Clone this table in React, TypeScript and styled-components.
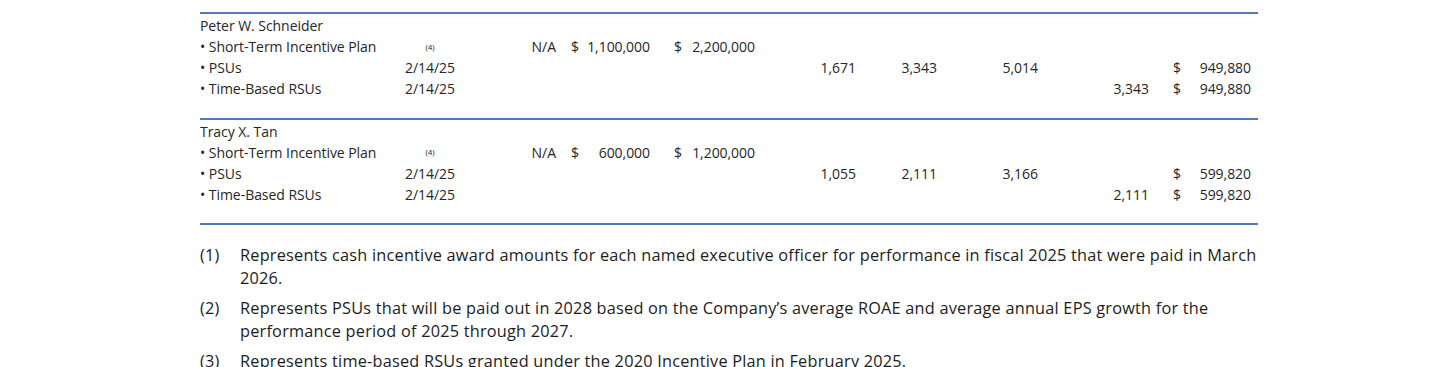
import styled, { createGlobalStyle } from 'styled-components';

const GlobalStyle = createGlobalStyle`
  html, body {
    margin: 0;
    padding: 0;
    background: #ffffff;
  }
  body {
    font-family: "Open Sans", "Noto Sans", sans-serif;
    color: #222;
  }
`;

// STYLED COMPONENTS

const Page = styled.div`
  width: 1058px;
  margin-left: 200px;
  padding-top: 12px;
`;

const Section = styled.div`
  border-top: 2px solid #4f78bf;
  padding: 1px 0 18.5px;
`;

const BottomRule = styled.div`
  border-top: 2px solid #4f78bf;
`;

const Row = styled.div`
  display: grid;
  grid-template-columns: 195px 70px 91px 94px 105px 101px 81px 101px 111px 102px 7px;
  height: 21px;
  align-items: center;
  font-size: 14px;
  letter-spacing: -0.05px;
  color: #262626;
  white-space: nowrap;
`;

const Label = styled.div`
  text-align: left;
`;

const Center = styled.div`
  text-align: center;
  position: relative;
`;

const Note = styled.sup`
  font-size: 8px;
  position: absolute;
  left: 0;
  right: 0;
  top: -6px;
  text-align: center;
`;

const Num = styled.div`
  text-align: right;
`;

const Money = styled.div<{ $pad: number }>`
  display: flex;
  justify-content: space-between;
  padding-left: ${(p) => p.$pad}px;
`;

const Footnotes = styled.ol`
  list-style: none;
  margin: 19px 0 0;
  padding: 0;
  font-size: 16.3px;
  letter-spacing: 0.22px;
  line-height: 23px;
  color: #1c1c1c;
`;

const Footnote = styled.li`
  display: grid;
  grid-template-columns: 40px 1fr;
  margin-bottom: 7px;
`;

type Line = {
  label: string;
  date?: string;
  note?: string;
  na?: string;
  target?: string;
  max?: string;
  threshold?: string;
  targetShares?: string;
  maxShares?: string;
  rsus?: string;
  fair?: string;
};

type Person = { name: string; lines: Line[] };

const people: Person[] = [
  {
    name: 'Peter W. Schneider',
    lines: [
      { label: 'Short-Term Incentive Plan', note: '(4)', na: 'N/A', target: '1,100,000', max: '2,200,000' },
      { label: 'PSUs', date: '2/14/25', threshold: '1,671', targetShares: '3,343', maxShares: '5,014', fair: '949,880' },
      { label: 'Time-Based RSUs', date: '2/14/25', rsus: '3,343', fair: '949,880' },
    ],
  },
  {
    name: 'Tracy X. Tan',
    lines: [
      { label: 'Short-Term Incentive Plan', note: '(4)', na: 'N/A', target: '600,000', max: '1,200,000' },
      { label: 'PSUs', date: '2/14/25', threshold: '1,055', targetShares: '2,111', maxShares: '3,166', fair: '599,820' },
      { label: 'Time-Based RSUs', date: '2/14/25', rsus: '2,111', fair: '599,820' },
    ],
  },
];

const notes = [
  'Represents cash incentive award amounts for each named executive officer for performance in fiscal 2025 that were paid in March 2026.',
  'Represents PSUs that will be paid out in 2028 based on the Company\u2019s average ROAE and average annual EPS growth for the performance period of 2025 through 2027.',
  'Represents time-based RSUs granted under the 2020 Incentive Plan in February 2025.',
];

const MoneyCell = ({ value, pad }: { value?: string; pad: number }) =>
  value ? (
    <Money $pad={pad}>
      <span>$</span>
      <span>{value}</span>
    </Money>
  ) : (
    <div />
  );

const App = () => (
  <>
    <GlobalStyle />
    <Page>
      {people.map((person) => (
        <Section key={person.name}>
          <Row>
            <Label>{person.name}</Label>
          </Row>
          {person.lines.map((line) => (
            <Row key={line.label}>
              <Label>• {line.label}</Label>
              <Center>
                {line.date}
                {line.note && <Note>{line.note}</Note>}
              </Center>
              <Num>{line.na}</Num>
              <MoneyCell value={line.target} pad={15} />
              <MoneyCell value={line.max} pad={24} />
              <Num>{line.threshold}</Num>
              <Num>{line.targetShares}</Num>
              <Num>{line.maxShares}</Num>
              <Num>{line.rsus}</Num>
              <MoneyCell value={line.fair} pad={24} />
              <div />
            </Row>
          ))}
        </Section>
      ))}
      <BottomRule />
      <Footnotes>
        {notes.map((text, i) => (
          <Footnote key={i}>
            <span>({i + 1})</span>
            <span>{text}</span>
          </Footnote>
        ))}
      </Footnotes>
    </Page>
  </>
);

export default App;
